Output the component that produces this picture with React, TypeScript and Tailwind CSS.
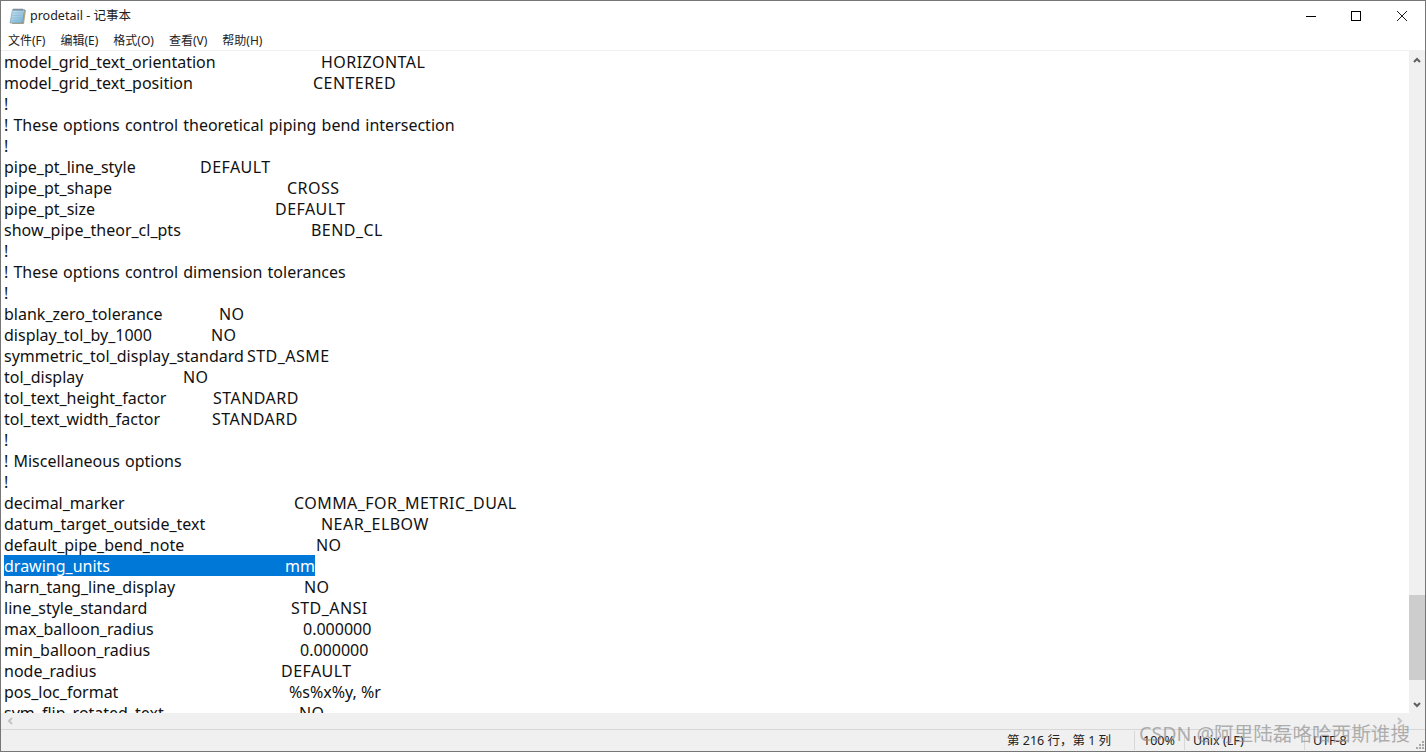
type Line = { key: string; x?: number; value?: string; selected?: boolean }

// x is where the value starts, the original file pads with tabs/spaces
const lines: Line[] = [
  { key: 'model_grid_text_orientation', x: 321, value: 'HORIZONTAL' },
  { key: 'model_grid_text_position', x: 313, value: 'CENTERED' },
  { key: '!' },
  { key: '! These options control theoretical piping bend intersection' },
  { key: '!' },
  { key: 'pipe_pt_line_style', x: 200, value: 'DEFAULT' },
  { key: 'pipe_pt_shape', x: 287, value: 'CROSS' },
  { key: 'pipe_pt_size', x: 275, value: 'DEFAULT' },
  { key: 'show_pipe_theor_cl_pts', x: 311, value: 'BEND_CL' },
  { key: '!' },
  { key: '! These options control dimension tolerances' },
  { key: '!' },
  { key: 'blank_zero_tolerance', x: 219, value: 'NO' },
  { key: 'display_tol_by_1000', x: 211, value: 'NO' },
  { key: 'symmetric_tol_display_standard', x: 247, value: 'STD_ASME' },
  { key: 'tol_display', x: 183, value: 'NO' },
  { key: 'tol_text_height_factor', x: 213, value: 'STANDARD' },
  { key: 'tol_text_width_factor', x: 212, value: 'STANDARD' },
  { key: '!' },
  { key: '! Miscellaneous options' },
  { key: '!' },
  { key: 'decimal_marker', x: 294, value: 'COMMA_FOR_METRIC_DUAL' },
  { key: 'datum_target_outside_text', x: 321, value: 'NEAR_ELBOW' },
  { key: 'default_pipe_bend_note', x: 316, value: 'NO' },
  { key: 'drawing_units', x: 285, value: 'mm', selected: true },
  { key: 'harn_tang_line_display', x: 304, value: 'NO' },
  { key: 'line_style_standard', x: 291, value: 'STD_ANSI' },
  { key: 'max_balloon_radius', x: 303, value: '0.000000' },
  { key: 'min_balloon_radius', x: 300, value: '0.000000' },
  { key: 'node_radius', x: 281, value: 'DEFAULT' },
  { key: 'pos_loc_format', x: 289, value: '%s%x%y, %r' },
  { key: 'sym_flip_rotated_text', x: 299, value: 'NO' },
]

const menus = ['文件(F)', '编辑(E)', '格式(O)', '查看(V)', '帮助(H)']

function NotepadIcon() {
  return (
    <svg width="18" height="17" viewBox="0 0 18 17" className="shrink-0">
      <defs>
        <linearGradient id="pad" x1="0" y1="0" x2="1" y2="1">
          <stop offset="0%" stopColor="#cfe8f5" />
          <stop offset="100%" stopColor="#6fb0d2" />
        </linearGradient>
      </defs>
      <path d="M5 2h12l-2 14H3z" fill="#b9a67e" />
      <path d="M3.5 1.5h12L13.5 15H1z" fill="url(#pad)" stroke="#6f8ea3" strokeWidth="0.6" />
      <path d="M3.6 5h10M3.2 7.5h10M2.9 10h10M2.5 12.5h10" stroke="#8fb6cc" strokeWidth="0.6" />
      <path d="M5 0.5v2.5M7 0.5v2.5M9 0.5v2.5M11 0.5v2.5M13 0.5v2.5" stroke="#55606a" strokeWidth="0.8" />
    </svg>
  )
}

function Caret({ d }: { d: string }) {
  return (
    <svg width="8" height="8" viewBox="0 0 8 8" fill="none" stroke="currentColor" strokeWidth="2">
      <path d={d} />
    </svg>
  )
}

function WindowButtons() {
  return (
    <div className="ml-auto flex items-center gap-[35px] pr-[18px]">
      <svg width="10" height="10" viewBox="0 0 10 10" shapeRendering="crispEdges">
        <path d="M0 5.5h10" stroke="#000" />
      </svg>
      <svg width="10" height="10" viewBox="0 0 10 10" shapeRendering="crispEdges">
        <rect x="0.5" y="0.5" width="9" height="9" fill="none" stroke="#000" />
      </svg>
      <svg width="10" height="10" viewBox="0 0 10 10" className="ml-[1px]">
        <path d="M0 0l10 10M10 0L0 10" stroke="#000" strokeWidth="0.9" />
      </svg>
    </div>
  )
}

function Grip() {
  return (
    <svg width="9" height="9" viewBox="0 0 9 9" className="absolute bottom-[1px] right-0" fill="#a9a9a9">
      <rect x="6" y="0" width="2" height="2" />
      <rect x="3" y="3" width="2" height="2" />
      <rect x="6" y="3" width="2" height="2" />
      <rect x="0" y="6" width="2" height="2" />
      <rect x="3" y="6" width="2" height="2" />
      <rect x="6" y="6" width="2" height="2" />
    </svg>
  )
}

export default function App() {
  return (
    <div
      className="flex h-[752px] w-[1426px] flex-col overflow-hidden border border-[#767676] bg-white text-black"
      style={{ fontFamily: '"Noto Sans", "Noto Sans CJK SC", sans-serif' }}
    >
      {/* title bar */}
      <div className="flex h-[29px] shrink-0 items-center pl-[8px] pt-[1px]">
        <NotepadIcon />
        <span className="ml-[3px] text-[12.5px] text-[#222]">prodetail - 记事本</span>
        <WindowButtons />
      </div>

      {/* menu bar */}
      <div className="flex h-[21px] shrink-0 items-center gap-[15px] border-b border-[#f0f0f0] pl-[7px] pt-[2px] text-xs text-[#222]">
        {menus.map((m) => (
          <span key={m}>{m}</span>
        ))}
      </div>

      {/* editor + vertical scrollbar */}
      <div className="flex min-h-0 flex-1">
        <div className="min-w-0 flex-1 overflow-hidden pl-[3px] text-base leading-[23px] text-[#111]">
          {lines.map((l, i) => (
            <div key={i} className="h-[21px] whitespace-pre">
              <span className={l.selected ? 'inline-flex h-[21px] bg-[#0078d7] text-white' : 'inline-flex h-[21px]'}>
                <span className="inline-block [word-spacing:1px]" style={l.x ? { width: l.x - 4 } : undefined}>
                  {l.key}
                </span>
                {l.value && <span className={/[A-Z]/.test(l.value) ? 'tracking-[0.45px]' : ''}>{l.value}</span>}
              </span>
            </div>
          ))}
        </div>
        <div className="flex w-[16px] shrink-0 flex-col bg-[#f0f0f0] text-[#606060]">
          <div className="flex h-[17px] items-center justify-center">
            <Caret d="M1 6l3-3 3 3" />
          </div>
          <div className="flex-1" />
          <div className="h-[85px] bg-[#cdcdcd]" />
          <div className="h-[16px]" />
          <div className="flex h-[17px] items-center justify-center">
            <Caret d="M1 2l3 3 3-3" />
          </div>
        </div>
      </div>

      {/* horizontal scrollbar */}
      <div className="flex h-[16px] shrink-0 items-center justify-between bg-[#f0f0f0] pl-[5px] pr-[21px] text-[#c4c4c4]">
        <Caret d="M6 1L3 4l3 3" />
        <Caret d="M2 1l3 3-3 3" />
      </div>

      {/* status bar */}
      <div className="relative flex h-[22px] shrink-0 items-center border-t border-[#d7d7d7] bg-[#f0f0f0] text-[12.5px] text-[#222]">
        <div className="ml-auto flex h-full items-center">
          <span className="w-[134px] border-r border-[#d7d7d7] pl-[6px] pt-[1px]">第 216 行，第 1 列</span>
          <span className="w-[50px] border-r border-[#d7d7d7] pl-[8px] pt-[1px]">100%</span>
          <span className="w-[120px] border-r border-[#d7d7d7] pl-[8px] pt-[1px]">Unix (LF)</span>
          <span className="w-[120px] pl-[8px] pt-[1px]">UTF-8</span>
        </div>
        <Grip />
        {/* CSDN watermark */}
        <span className="absolute right-[15px] top-[-11px] text-[19.6px] text-[#8f8f8f]/70">CSDN @阿里陆磊咯哈西斯谁搜</span>
      </div>
    </div>
  )
}
